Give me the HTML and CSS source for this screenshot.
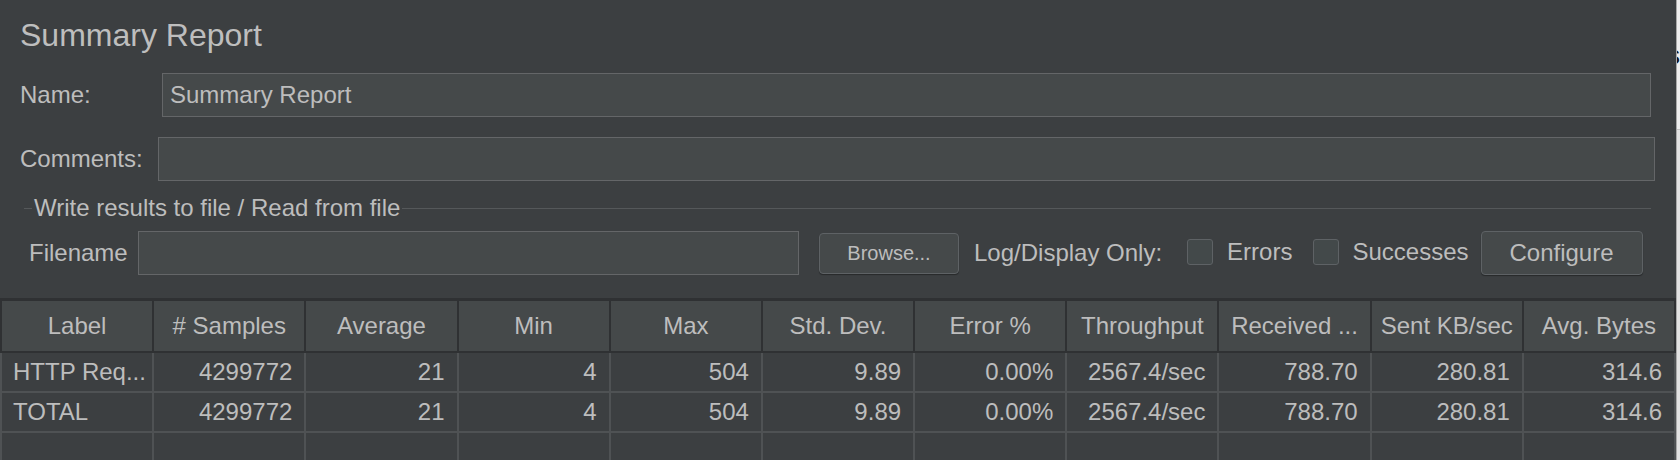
FILE: index.html
```html
<!DOCTYPE html>
<html lang="en">
<head>
<meta charset="utf-8">
<title>Summary Report</title>
<link rel="stylesheet" href="styles.css">
</head>
<body>
<div class="app">
  <div class="panel">
    <div class="title">Summary Report</div>
    <div class="row name-row">
      <span class="lbl name-lbl">Name:</span>
      <div class="field name-field">Summary Report</div>
    </div>
    <div class="row comments-row">
      <span class="lbl comments-lbl">Comments:</span>
      <div class="field comments-field"></div>
    </div>
    <div class="section">
      <span class="sec-lead"></span>
      <span class="sec-text">Write results to file / Read from file</span>
      <span class="sec-line"></span>
    </div>
    <div class="row file-row">
      <span class="lbl file-lbl">Filename</span>
      <div class="field file-field"></div>
      <button class="btn browse">Browse...</button>
      <span class="lbl log-lbl">Log/Display Only:</span>
      <span class="check check-errors"></span>
      <span class="lbl errors-lbl">Errors</span>
      <span class="check check-success"></span>
      <span class="lbl success-lbl">Successes</span>
      <button class="btn configure">Configure</button>
    </div>
    <div class="table">
      <div class="thead">
        <div class="th">Label</div>
        <div class="th"># Samples</div>
        <div class="th">Average</div>
        <div class="th">Min</div>
        <div class="th">Max</div>
        <div class="th">Std. Dev.</div>
        <div class="th">Error %</div>
        <div class="th">Throughput</div>
        <div class="th">Received ...</div>
        <div class="th">Sent KB/sec</div>
        <div class="th">Avg. Bytes</div>
      </div>
      <div class="trow">
        <div class="td txt">HTTP Req...</div>
        <div class="td">4299772</div>
        <div class="td">21</div>
        <div class="td">4</div>
        <div class="td">504</div>
        <div class="td">9.89</div>
        <div class="td">0.00%</div>
        <div class="td">2567.4/sec</div>
        <div class="td">788.70</div>
        <div class="td">280.81</div>
        <div class="td">314.6</div>
      </div>
      <div class="trow">
        <div class="td txt">TOTAL</div>
        <div class="td">4299772</div>
        <div class="td">21</div>
        <div class="td">4</div>
        <div class="td">504</div>
        <div class="td">9.89</div>
        <div class="td">0.00%</div>
        <div class="td">2567.4/sec</div>
        <div class="td">788.70</div>
        <div class="td">280.81</div>
        <div class="td">314.6</div>
      </div>
      <div class="trow empty">
        <div class="td"></div><div class="td"></div><div class="td"></div><div class="td"></div>
        <div class="td"></div><div class="td"></div><div class="td"></div><div class="td"></div>
        <div class="td"></div><div class="td"></div><div class="td"></div>
      </div>
    </div>
  </div>
  <div class="side">
    <div class="side-top"><span class="glyph">s</span></div>
    <div class="side-bottom"></div>
  </div>
</div>
</body>
</html>
```
FILE: styles.css
```css
* { box-sizing: border-box; }
html, body {
  margin: 0;
  padding: 0;
  width: 1680px;
  height: 460px;
  overflow: hidden;
  background: #e6e6e6;
  font-family: "Liberation Sans", Helvetica, Arial, sans-serif;
}
.app {
  display: flex;
  width: 1680px;
  height: 460px;
}
.panel {
  width: 1676px;
  height: 460px;
  background: #3c3f41;
  color: #bdbdbd;
  display: flex;
  flex-direction: column;
  padding-top: 15px;
  overflow: hidden;
  flex: none;
}
.title {
  height: 40px;
  line-height: 40px;
  font-size: 32px;
  padding-left: 20px;
  color: #bebebe;
}
.row {
  display: flex;
  align-items: center;
  height: 44px;
  font-size: 24px;
}
.lbl { white-space: nowrap; }
.field {
  height: 44px;
  background: #45494a;
  border: 1px solid #646668;
  font-size: 24px;
  line-height: 42px;
  padding-left: 7px;
  color: #bdbdbd;
}
.name-row { margin-top: 18px; padding-left: 20px; }
.name-lbl { width: 142px; }
.name-field { width: 1489px; height: 44px; }
.comments-row { margin-top: 20px; padding-left: 20px; }
.comments-lbl { width: 138px; }
.comments-field { width: 1497px; }

.section {
  display: flex;
  align-items: center;
  height: 34px;
  margin-top: 13px;
  padding-left: 24px;
  font-size: 24px;
}
.sec-lead {
  width: 8px;
  height: 1px;
  background: #55585a;
}
.sec-text {
  padding: 0 2px;
  white-space: nowrap;
}
.sec-line {
  flex: 1;
  height: 1px;
  background: #55585a;
  margin-right: 25px;
}
.file-row { margin-top: 9px; padding-left: 29px; }
.file-lbl { width: 109px; }
.file-field { width: 661px; }
.btn {
  font-family: inherit;
  color: #bdbdbd;
  background: #45494a;
  border: 1px solid #5e6265;
  border-radius: 4px;
  box-shadow: 0 1px 1px rgba(0,0,0,0.35);
  padding: 0;
}
.browse {
  margin-left: 20px;
  width: 140px;
  height: 41px;
  font-size: 20px;
}
.log-lbl { margin-left: 15px; }
.check {
  width: 26px;
  height: 26px;
  border: 1px solid #5e6265;
  border-radius: 3px;
  background: #43494a;
  flex: none;
}
.check-errors { margin-left: 25px; margin-top: -3px; }
.errors-lbl { margin-left: 14px; margin-top: -3px; }
.check-success { margin-left: 21px; margin-top: -3px; }
.success-lbl { margin-left: 13px; margin-top: -3px; }
.configure {
  margin-left: 12px;
  width: 162px;
  height: 44px;
  font-size: 24px;
}

.table {
  margin-top: 23px;
  border-top: 3px solid #2f3133;
  font-size: 24px;
  flex: 1;
  background: #3c3f41;
}
.thead, .trow {
  display: grid;
  grid-template-columns: repeat(11, 1fr);
  column-gap: 2px;
  padding: 0 2px;
}
.thead {
  background: #2f3133;
  border-bottom: 2px solid #2f3133;
}
.th {
  height: 50px;
  line-height: 50px;
  background: #45494a;
  text-align: center;
  white-space: nowrap;
  overflow: hidden;
}
.trow {
  background: #4f5254;
  border-bottom: 2px solid #4f5254;
}
.td {
  height: 38px;
  line-height: 38px;
  background: #3c3f41;
  text-align: right;
  padding-right: 12px;
  white-space: nowrap;
  overflow: hidden;
}
.td.txt {
  text-align: left;
  padding-left: 11px;
  padding-right: 0;
}
.trow.empty .td { height: 40px; }

.side {
  width: 4px;
  height: 460px;
  border-left: 1px solid #a9a9a9;
  display: flex;
  flex-direction: column;
  overflow: hidden;
}
.side-top {
  height: 130px;
  background: #eeeeee;
  border-bottom: 1px solid #c4c4c4;
  overflow: hidden;
  padding-top: 40px;
}
.glyph {
  display: block;
  margin-left: -10px;
  font-size: 26px;
  line-height: 30px;
  color: #111111;
}
.side-bottom {
  flex: 1;
  background: #e2e2e2;
}
```
